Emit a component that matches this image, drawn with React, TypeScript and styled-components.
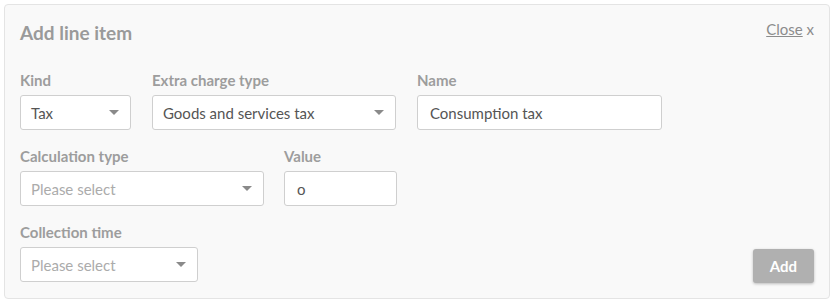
import React from "react";
import styled, { createGlobalStyle } from "styled-components";

const Global = createGlobalStyle`
  html, body { margin: 0; padding: 0; background: #ffffff; }
  body { font-family: "Lato", "Open Sans", sans-serif; }
  * { box-sizing: border-box; }
`;

const Page = styled.div`
  padding: 4px 7px 5px 4px;
`;

const Panel = styled.section`
  background: #f9f9f9;
  border: 1px solid #e4e4e4;
  border-radius: 4px;
  padding: 15px 15px 14px 15px;
  height: 295px;
  display: flex;
  flex-direction: column;
`;

const Header = styled.div`
  display: flex;
  justify-content: space-between;
  align-items: flex-start;
  margin-bottom: 24px;
`;

const Title = styled.h2`
  margin: 0;
  font-size: 19px;
  line-height: 26px;
  font-weight: 700;
  color: #9a9a9a;
`;

const Close = styled.a`
  font-size: 15px;
  line-height: 20px;
  color: #8c8c8c;
  margin-top: -1px;
  cursor: pointer;
  span { text-decoration: underline; }
`;

const Row = styled.div<{ $gap?: number; $last?: boolean }>`
  display: flex;
  gap: ${(p) => p.$gap ?? 21}px;
  align-items: flex-end;
  margin-bottom: ${(p) => (p.$last ? 0 : 16)}px;
`;

const Group = styled.div<{ $w: number }>`
  width: ${(p) => p.$w}px;
  display: flex;
  flex-direction: column;
  gap: 5px;
`;

const Label = styled.label`
  font-size: 15px;
  line-height: 20px;
  font-weight: 700;
  color: #9d9d9d;
`;

const Field = styled.div<{ $placeholder?: boolean; $text?: boolean }>`
  height: 35px;
  background: #fff;
  border: 1px solid #cfcfcf;
  border-radius: 3px;
  padding: 0 11px 0 ${(p) => (p.$text ? 12 : 10)}px;
  display: flex;
  align-items: center;
  justify-content: space-between;
  font-size: 15px;
  color: ${(p) => (p.$placeholder ? "#ababab" : "#555")};
`;

const Caret = styled.span`
  width: 0;
  height: 0;
  border-left: 5px solid transparent;
  border-right: 5px solid transparent;
  border-top: 5px solid #8a8a8a;
`;

const Spacer = styled.div`
  flex: 1;
`;

const AddButton = styled.button`
  width: 61px;
  height: 34px;
  border: none;
  border-radius: 3px;
  background: #b0b0b0;
  color: #fff;
  font-family: "Lato", sans-serif;
  font-size: 15px;
  font-weight: 700;
  box-shadow: 0 1px 3px rgba(0, 0, 0, 0.25);
  margin-bottom: -1px;
`;

const Select = ({ w, label, value, placeholder }: { w: number; label: string; value?: string; placeholder?: string }) => (
  <Group $w={w}>
    <Label>{label}</Label>
    <Field $placeholder={!value}>
      <span>{value ?? placeholder}</span>
      <Caret />
    </Field>
  </Group>
);

const Input = ({ w, label, value }: { w: number; label: string; value: string }) => (
  <Group $w={w}>
    <Label>{label}</Label>
    <Field $text>
      <span>{value}</span>
    </Field>
  </Group>
);

export default function App() {
  return (
    <Page>
      <Global />
      <Panel>
        <Header>
          <Title>Add line item</Title>
          <Close>
            <span>Close</span> x
          </Close>
        </Header>
        <Row>
          <Select w={111} label="Kind" value="Tax" />
          <Select w={244} label="Extra charge type" value="Goods and services tax" />
          <Input w={245} label="Name" value="Consumption tax" />
        </Row>
        <Row $gap={20}>
          <Select w={244} label="Calculation type" placeholder="Please select" />
          <Input w={113} label="Value" value="o" />
        </Row>
        <Row $last>
          <Select w={178} label="Collection time" placeholder="Please select" />
          <Spacer />
          <AddButton>Add</AddButton>
        </Row>
      </Panel>
    </Page>
  );
}
